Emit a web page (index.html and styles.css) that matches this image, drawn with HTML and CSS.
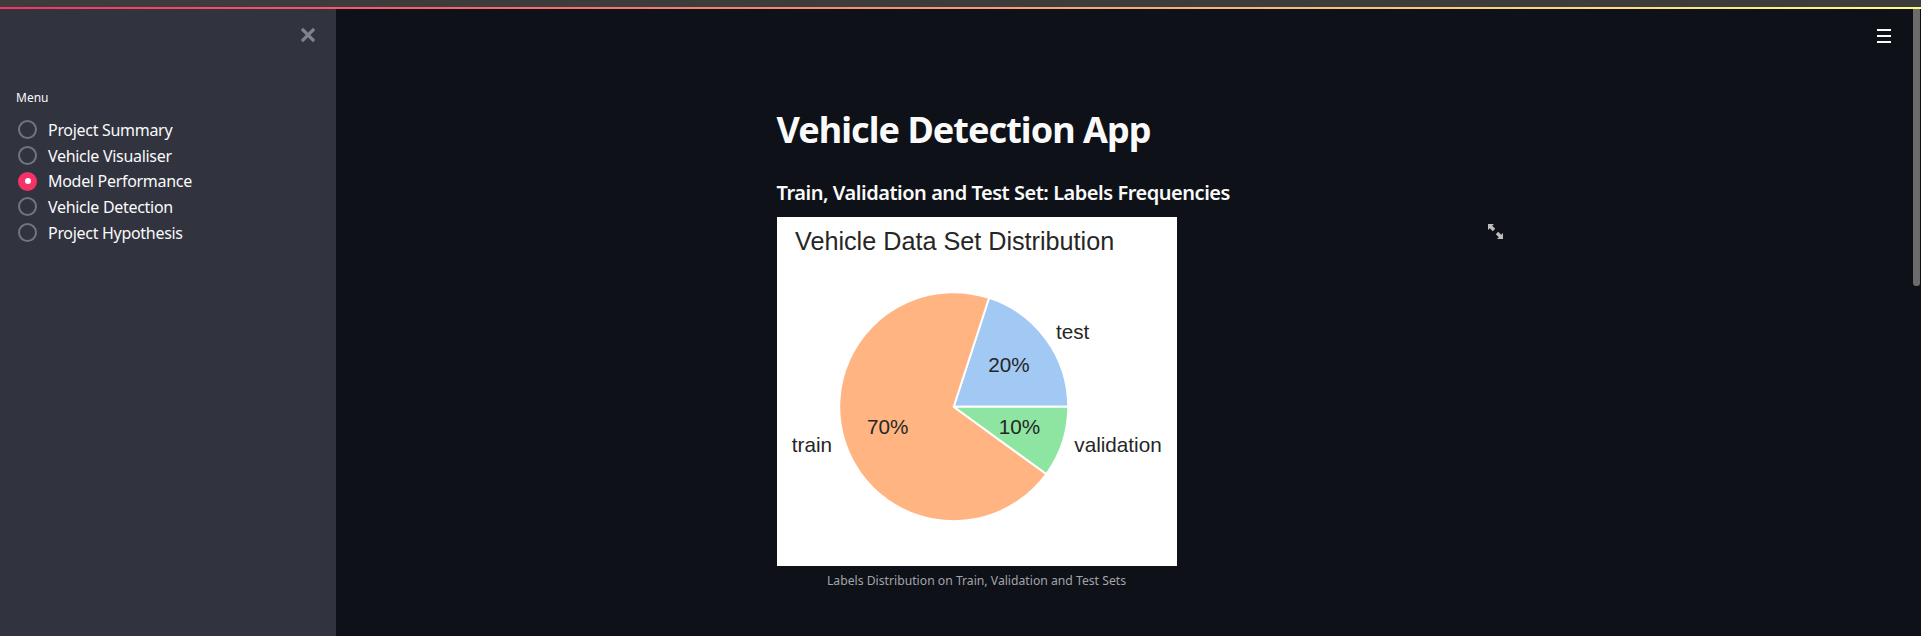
FILE: index.html
```html
<!DOCTYPE html>
<html lang="en">
<head>
<meta charset="utf-8">
<title>Vehicle Detection App</title>
<link rel="stylesheet" href="styles.css">
</head>
<body>
<div class="topstrip"></div>
<div class="decoration"></div>
<div class="app">
  <aside class="sidebar">
    <div class="sb-head">
      <svg class="close" width="14" height="14" viewBox="0 0 14 14"><path d="M2 2 L12 12 M12 2 L2 12" stroke="#7f818d" stroke-width="3.2" stroke-linecap="square"/></svg>
    </div>
    <div class="menu-label">Menu</div>
    <div class="radios">
      <div class="radio"><span class="dot"></span><span class="rlabel">Project Summary</span></div>
      <div class="radio"><span class="dot"></span><span class="rlabel">Vehicle Visualiser</span></div>
      <div class="radio checked"><span class="dot"></span><span class="rlabel">Model Performance</span></div>
      <div class="radio"><span class="dot"></span><span class="rlabel">Vehicle Detection</span></div>
      <div class="radio"><span class="dot"></span><span class="rlabel">Project Hypothesis</span></div>
    </div>
  </aside>
  <main class="main">
    <div class="block">
      <h1 class="title">Vehicle Detection App</h1>
      <h3 class="subtitle">Train, Validation and Test Set: Labels Frequencies</h3>
      <figure class="figure">
        <div class="chart">
          <svg width="400" height="349" viewBox="0 0 400 349">
            <rect width="400" height="349" fill="#ffffff"/>
            <text x="18" y="33" class="ctitle">Vehicle Data Set Distribution</text>
            <path d="M176.7 189.7 L291.2 189.7 A114.5 114.5 0 0 0 212.08 80.8 Z" fill="#a1c9f4" stroke="#fff" stroke-width="2" stroke-linejoin="round"/>
            <path d="M176.7 189.7 L212.08 80.8 A114.5 114.5 0 1 0 269.33 257.0 Z" fill="#ffb482" stroke="#fff" stroke-width="2" stroke-linejoin="round"/>
            <path d="M176.7 189.7 L269.33 257.0 A114.5 114.5 0 0 0 291.2 189.7 Z" fill="#8de5a1" stroke="#fff" stroke-width="2" stroke-linejoin="round"/>
            <text x="279" y="121.5" class="clabel">test</text>
            <text x="232" y="155.3" class="clabel mid">20%</text>
            <text x="55" y="235.3" class="clabel end">train</text>
            <text x="110.7" y="217" class="clabel mid">70%</text>
            <text x="242.5" y="217" class="clabel mid">10%</text>
            <text x="297.3" y="235.3" class="clabel">validation</text>
          </svg>
          <svg class="expand" width="15" height="15" viewBox="0 0 15 15"><path d="M0 0 L6 0 L4.2 1.8 L7.2 4.8 L4.8 7.2 L1.8 4.2 L0 6 Z M15 15 L9 15 L10.8 13.2 L7.8 10.2 L10.2 7.8 L13.2 10.8 L15 9 Z" fill="#bdbdbd"/></svg>
        </div>
        <figcaption class="caption">Labels Distribution on Train, Validation and Test Sets</figcaption>
      </figure>
    </div>
  </main>
  <div class="menu-btn"><span></span><span></span><span></span></div>
  <div class="scrollthumb"></div>
</div>
</body>
</html>
```

FILE: styles.css
```css
html, body {
  margin: 0;
  padding: 0;
  height: 636px;
  overflow: hidden;
  background: #0e1117;
  font-family: "Noto Sans", "Open Sans", sans-serif;
  color: #fafafa;
}

.topstrip {
  height: 7px;
  background: #3c3c3c;
}

.decoration {
  height: 2px;
  background: linear-gradient(90deg, #f63366, #fffd80);
}

.app {
  position: relative;
  display: flex;
  height: 627px;
}

.sidebar {
  width: 336px;
  flex: 0 0 336px;
  background: #31333f;
  box-sizing: border-box;
  padding: 0 0 0 16px;
}

.sb-head {
  display: flex;
  justify-content: flex-end;
  padding: 19px 21px 0 0;
  height: 14px;
}

.close {
  display: block;
}

.menu-label {
  margin-top: 48px;
  font-size: 12px;
  line-height: 16px;
  color: #fafafa;
}

.radios {
  margin-top: 11px;
  margin-left: 2px;
  display: flex;
  flex-direction: column;
}

.radio {
  display: flex;
  align-items: center;
  height: 25.7px;
  gap: 11px;
}

.dot {
  width: 19px;
  height: 19px;
  box-sizing: border-box;
  border-radius: 50%;
  border: 2px solid #72747e;
  flex: 0 0 19px;
  display: flex;
  align-items: center;
  justify-content: center;
}

.radio.checked .dot {
  background: #f63366;
  border-color: #f63366;
}

.radio.checked .dot::after {
  content: "";
  width: 6px;
  height: 6px;
  border-radius: 50%;
  background: #ffffff;
}

.rlabel {
  font-size: 16px;
  line-height: 20px;
  letter-spacing: -0.3px;
  color: #fafafa;
}

.main {
  flex: 1;
  overflow: hidden;
  display: flex;
  justify-content: center;
}

.block {
  width: 704px;
  padding-top: 99px;
}

.title {
  margin: 0;
  font-size: 36px;
  line-height: 44px;
  font-weight: 700;
  letter-spacing: -0.95px;
  color: #fafafa;
}

.subtitle {
  margin: 27px 0 0;
  font-size: 20px;
  line-height: 28px;
  font-weight: 600;
  letter-spacing: -0.47px;
  color: #fafafa;
}

.figure {
  margin: 10px 0 0;
  width: 400px;
}

.chart {
  position: relative;
  width: 400px;
  height: 349px;
}

.chart > svg:first-child {
  display: block;
}

.ctitle {
  font-family: "Liberation Sans", Arial, sans-serif;
  font-size: 25.2px;
  fill: #262626;
}

.clabel {
  font-family: "Liberation Sans", Arial, sans-serif;
  font-size: 20.7px;
  fill: #262626;
}

.clabel.mid {
  text-anchor: middle;
}

.clabel.end {
  text-anchor: end;
}

.expand {
  position: absolute;
  left: 711px;
  top: 7px;
}

.caption {
  margin-top: 7px;
  text-align: center;
  font-size: 12.2px;
  line-height: 16px;
  color: #a3a5ab;
}

.menu-btn {
  position: absolute;
  top: 20px;
  right: 30px;
  width: 14px;
  display: flex;
  flex-direction: column;
  gap: 4px;
}

.menu-btn span {
  display: block;
  height: 2px;
  background: #fafafa;
}

.scrollthumb {
  position: absolute;
  top: 0;
  right: 1px;
  width: 7px;
  height: 277px;
  background: #6b6b6b;
  border-radius: 0 0 3px 3px;
}
```
